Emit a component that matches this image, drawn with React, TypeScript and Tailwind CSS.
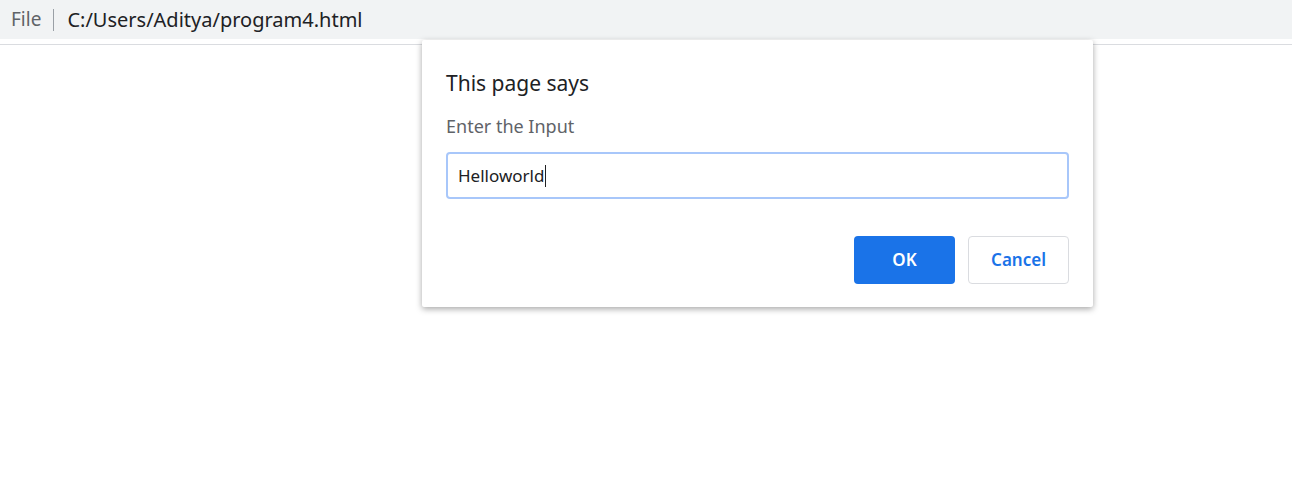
export default function App() {
  return (
    <div className="relative h-[500px] w-full bg-white" style={{ fontFamily: '"Noto Sans", "Open Sans", sans-serif' }}>
      {/* Address bar */}
      <div className="flex h-[39px] items-center bg-[#f1f3f4] pl-[11px]">
        <span className="text-[19px] text-[#5f6368]">File</span>
        <span className="ml-[12px] mr-[13px] h-[22px] w-px bg-[#9aa0a6]" />
        <span className="text-[20px] text-[#202124]">C:/Users/Aditya/program4.html</span>
      </div>
      <div className="mt-[5px] h-px bg-[#dadce0]" />

      {/* Prompt dialog */}
      <div className="absolute left-[422px] top-[40px] w-[671px] rounded-[2px] bg-white px-6 pb-[23px] pt-[27px] shadow-[0_2px_6px_rgba(0,0,0,0.35)]">
        <h1 className="text-[21px] leading-[32px] text-[#202124]">This page says</h1>
        <p className="mt-[15px] text-[18px] leading-[24px] text-[#5f6368]">Enter the Input</p>
        <div className="mt-[14px] flex h-[47px] items-center rounded-[4px] border-2 border-[#a8c7fa] px-[10px] text-[17px] text-[#202124]">
          Helloworld
          <span className="ml-px h-[22px] w-px bg-[#202124]" />
        </div>
        <div className="mt-[37px] flex justify-end gap-[13px]">
          <button className="flex h-[48px] w-[101px] items-center justify-center rounded-[4px] bg-[#1a73e8] text-[17px] font-semibold text-white">
            OK
          </button>
          <button className="flex h-[48px] w-[101px] items-center justify-center rounded-[4px] border border-[#dadce0] bg-white text-[17px] font-semibold text-[#1a73e8]">
            Cancel
          </button>
        </div>
      </div>
    </div>
  );
}
